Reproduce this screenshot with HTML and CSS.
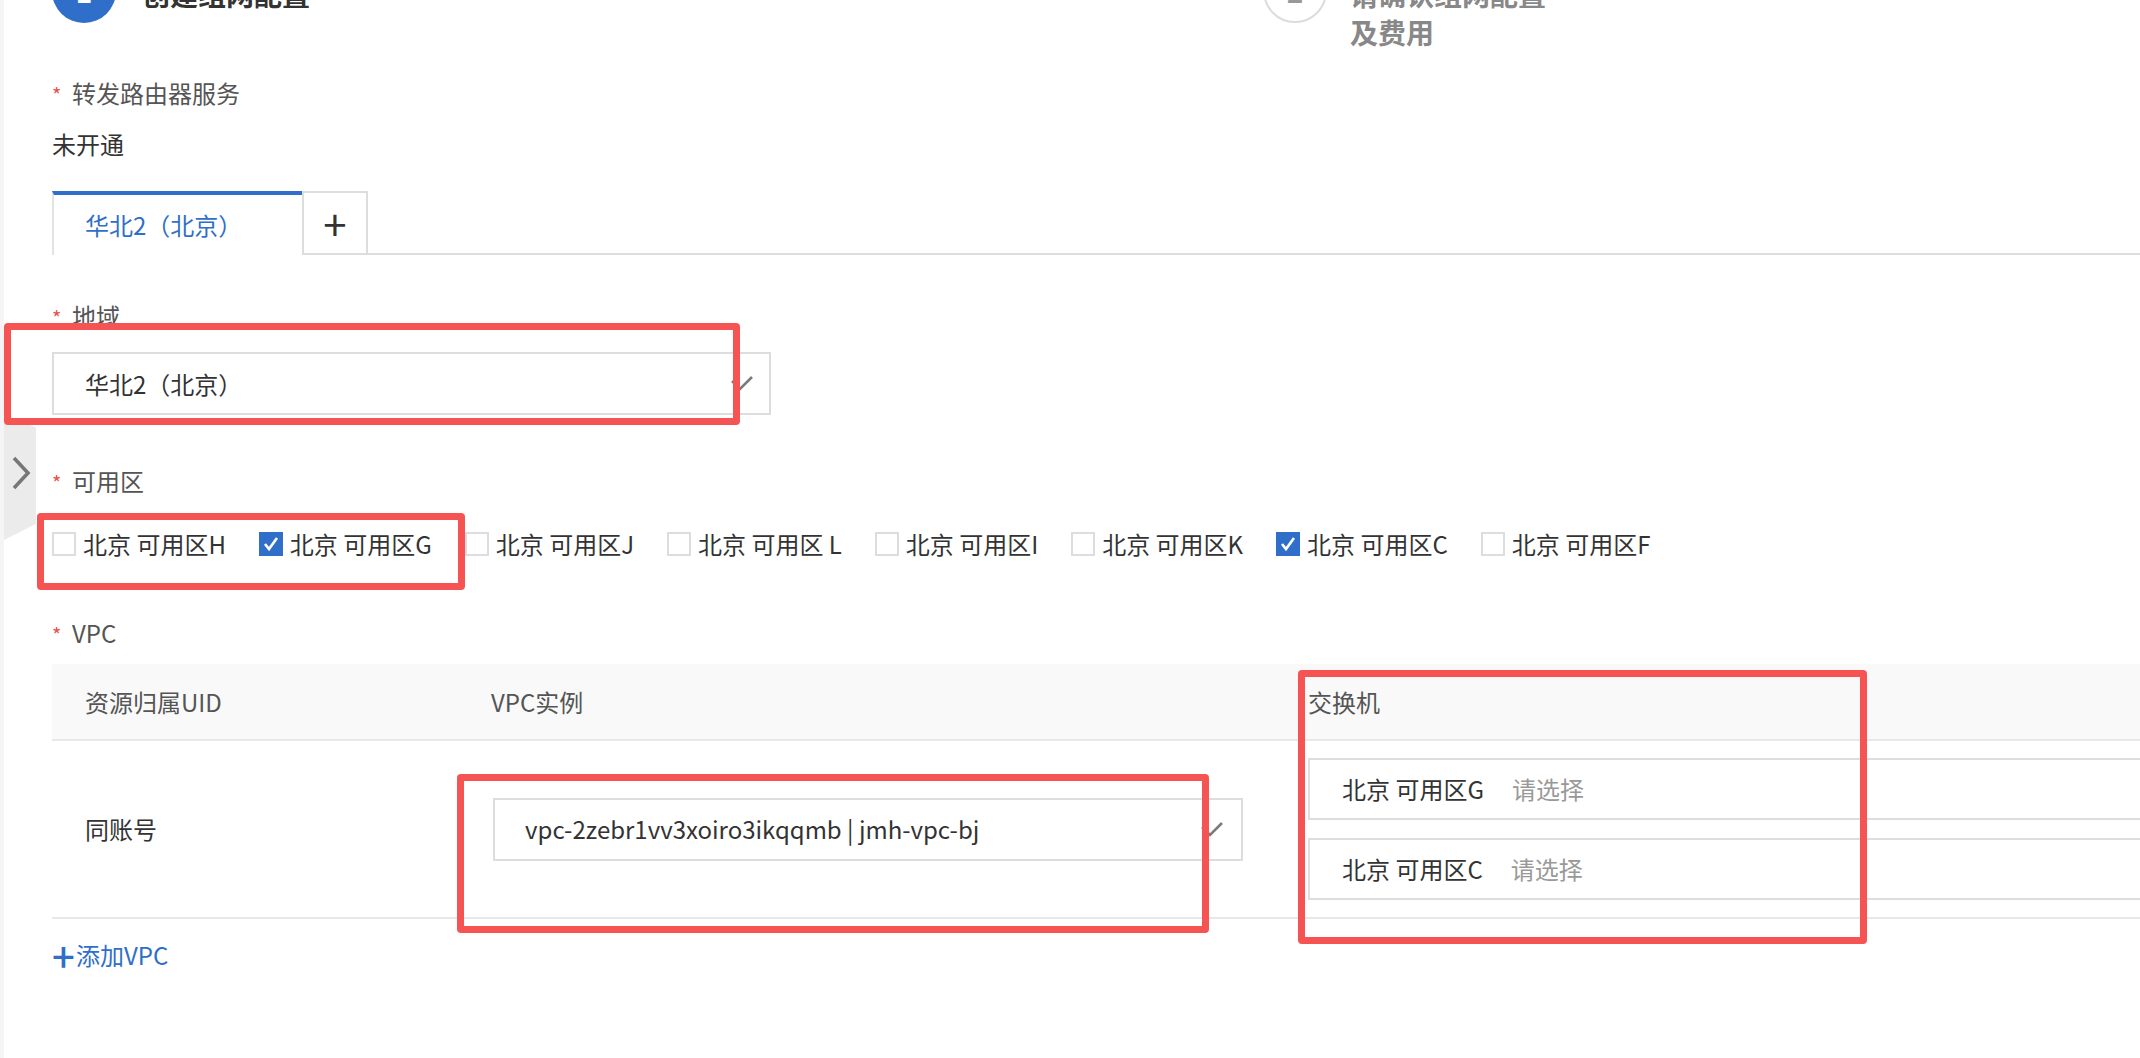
FILE: index.html
```html
<!DOCTYPE html>
<html lang="zh-CN">
<head>
<meta charset="utf-8">
<title>创建组网配置</title>
<link rel="stylesheet" href="styles.css">
</head>
<body>
<div class="page">
  <div class="side-strip"></div>
  <main class="main">
    <div class="steps">
      <div class="step step-first">
        <div class="step-icon">1</div>
        <div class="step-title">创建组网配置</div>
      </div>
      <div class="step step-next">
        <div class="step-icon">2</div>
        <div class="step-title">请确认组网配置及费用</div>
      </div>
    </div>

    <div class="form">
      <div class="label field-tr"><span class="req">*</span>转发路由器服务</div>
      <div class="value">未开通</div>

      <div class="tabs">
        <div class="tab tab-active">华北2（北京）</div>
        <div class="tab tab-add">+</div>
      </div>

      <div class="label field-region"><span class="req">*</span>地域</div>
      <div class="select select-region">
        <span>华北2（北京）</span>
        <svg class="sel-icon" width="22" height="15" viewBox="0 0 22 15"><polyline points="1,5 9,13 21,1" fill="none" stroke="#7a7a7a" stroke-width="2.6"/></svg>
      </div>

      <div class="label field-zone"><span class="req">*</span>可用区</div>
      <div class="checks">
        <label class="check"><span class="box"></span>北京 可用区H</label>
        <label class="check"><span class="box on"><svg width="20" height="20" viewBox="0 0 20 20"><polyline points="4,10 8,15 16,4" fill="none" stroke="#fff" stroke-width="2.6"/></svg></span>北京 可用区G</label>
        <label class="check"><span class="box"></span>北京 可用区J</label>
        <label class="check"><span class="box"></span>北京 可用区 L</label>
        <label class="check"><span class="box"></span>北京 可用区I</label>
        <label class="check"><span class="box"></span>北京 可用区K</label>
        <label class="check"><span class="box on"><svg width="20" height="20" viewBox="0 0 20 20"><polyline points="4,10 8,15 16,4" fill="none" stroke="#fff" stroke-width="2.6"/></svg></span>北京 可用区C</label>
        <label class="check"><span class="box"></span>北京 可用区F</label>
      </div>

      <div class="label field-vpc"><span class="req">*</span>VPC</div>
      <div class="grid-head">
        <div class="cell">资源归属UID</div>
        <div class="cell">VPC实例</div>
        <div class="cell">交换机</div>
      </div>
      <div class="grid-row">
        <div class="cell">同账号</div>
        <div class="cell">
          <div class="select select-vpc">
            <span>vpc-2zebr1vv3xoiro3ikqqmb | jmh-vpc-bj</span>
            <svg class="sel-icon" width="22" height="15" viewBox="0 0 22 15"><polyline points="1,5 9,13 21,1" fill="none" stroke="#7a7a7a" stroke-width="2.6"/></svg>
          </div>
        </div>
        <div class="cell switches">
          <div class="sw-input"><span class="sw-zone">北京 可用区G</span><span class="sw-ph">请选择</span></div>
          <div class="sw-input"><span class="sw-zone">北京 可用区C</span><span class="sw-ph">请选择</span></div>
        </div>
      </div>

      <div class="add-vpc"><span class="plus">+</span>添加VPC</div>
    </div>
  </main>

  <div class="collapse">
    <svg width="32" height="125" viewBox="0 0 32 125"><polyline points="10,43 24,58 10,73" fill="none" stroke="#777" stroke-width="3.6"/></svg>
  </div>

  <div class="mark mark-1"></div>
  <div class="mark mark-2"></div>
  <div class="mark mark-3"></div>
  <div class="mark mark-4"></div>
</div>
</body>
</html>
```

FILE: styles.css
```css
* { box-sizing: border-box; }
html, body { margin: 0; padding: 0; }
body {
  width: 2140px;
  height: 1058px;
  overflow: hidden;
  background: #fff;
  font-family: "Noto Sans CJK SC", "Noto Sans", sans-serif;
  font-size: 24px;
  line-height: 32px;
  color: #333;
}
.page {
  position: relative;
  display: flex;
  height: 1058px;
}
.side-strip {
  width: 4px;
  flex: none;
  background: #f5f5f5;
}
.main {
  flex: 1;
  min-width: 0;
  padding-left: 48px;
  overflow: hidden;
}

/* steps */
.steps {
  display: flex;
  margin-top: -41px;
}
.step {
  display: flex;
  align-items: flex-start;
}
.step-first { width: 1211px; }
.step-icon {
  width: 64px;
  height: 64px;
  flex: none;
  border-radius: 50%;
  display: flex;
  align-items: center;
  justify-content: center;
  font-size: 28px;
  font-weight: 700;
}
.step-first .step-icon { background: #2f6fc9; color: #fff; }
.step-next .step-icon { border: 2px solid #dcdcdc; color: #999; }
.step-title {
  margin-top: 16px;
  font-size: 28px;
  line-height: 38px;
  font-weight: 700;
}
.step-first .step-title { margin-left: 26px; color: #333; }
.step-next .step-title { margin-left: 23px; color: #888; width: 200px; }

/* form */
.label { color: #555; }
.req {
  display: inline-block;
  width: 20px;
  font-size: 20px;
  color: #e5534b;
}
.field-tr { margin-top: 26px; }
.value { margin-top: 17px; color: #333; }

.tabs {
  margin-top: 31px;
  display: flex;
  height: 64px;
  border-bottom: 2px solid #ddd;
}
.tab {
  display: flex;
  align-items: center;
  height: 62px;
}
.tab-active {
  width: 250px;
  height: 64px;
  margin-bottom: -2px;
  border-top: 4px solid #2f6fc9;
  border-left: 2px solid #e3e3e3;
  padding-left: 31px;
  background: #fff;
  color: #2f6fc9;
}
.tab-add {
  width: 66px;
  border: 2px solid #ddd;
  border-bottom: none;
  justify-content: center;
  font-size: 42px;
  font-weight: 400;
  color: #333;
}

.field-region { margin-top: 45px; }
.select {
  height: 63px;
  border: 2px solid #ddd;
  display: flex;
  align-items: center;
  justify-content: space-between;
  color: #333;
  background: #fff;
}
.select-region {
  margin-top: 18px;
  width: 719px;
  padding: 0 16px 0 31px;
}
.select-vpc {
  width: 750px;
  margin-left: 2px;
  padding: 0 18px 0 30px;
}
.sel-icon { flex: none; }

.field-zone { margin-top: 50px; }
.checks {
  margin-top: 29px;
  display: flex;
}
.check {
  display: flex;
  align-items: center;
  margin-right: 33px;
  color: #333;
}
.box {
  width: 24px;
  height: 24px;
  margin-right: 7px;
  border: 2px solid #ddd;
  background: #fff;
  display: flex;
  align-items: center;
  justify-content: center;
}
.box.on {
  background: #2f6fc9;
  border-color: #2f6fc9;
}

.field-vpc { margin-top: 57px; }
.grid-head,
.grid-row {
  display: grid;
  grid-template-columns: 406px 817px 1000px;
  align-items: center;
}
.grid-head {
  margin-top: 13px;
  height: 77px;
  background: #f9f9f9;
  border-bottom: 2px solid #e8e8e8;
  color: #555;
}
.grid-row {
  height: 178px;
  border-bottom: 2px solid #e8e8e8;
}
.cell { padding-left: 33px; }
.switches {
  display: flex;
  flex-direction: column;
  gap: 18px;
}
.sw-input {
  width: 950px;
  height: 62px;
  border: 2px solid #ddd;
  border-right: none;
  display: flex;
  align-items: center;
  padding-left: 32px;
}
.sw-zone { color: #333; }
.sw-ph { margin-left: 28px; color: #999; }

.add-vpc {
  margin-top: 20px;
  display: flex;
  align-items: center;
  color: #2f6fc9;
}
.plus {
  font-size: 40px;
  font-weight: 500;
  width: 24px;
}

/* overlays */
.collapse {
  position: absolute;
  left: 4px;
  top: 415px;
  width: 32px;
  height: 125px;
  background: #ebebeb;
  clip-path: polygon(0 0, 100% 10%, 100% 87%, 0 100%);
}
.collapse svg { display: block; }
.mark {
  position: absolute;
  border: 7px solid #f65353;
  border-radius: 4px;
}
.mark-1 { left: 4px; top: 323px; width: 736px; height: 102px; }
.mark-2 { left: 37px; top: 513px; width: 428px; height: 77px; }
.mark-3 { left: 457px; top: 774px; width: 752px; height: 159px; }
.mark-4 { left: 1298px; top: 670px; width: 569px; height: 274px; }
```
